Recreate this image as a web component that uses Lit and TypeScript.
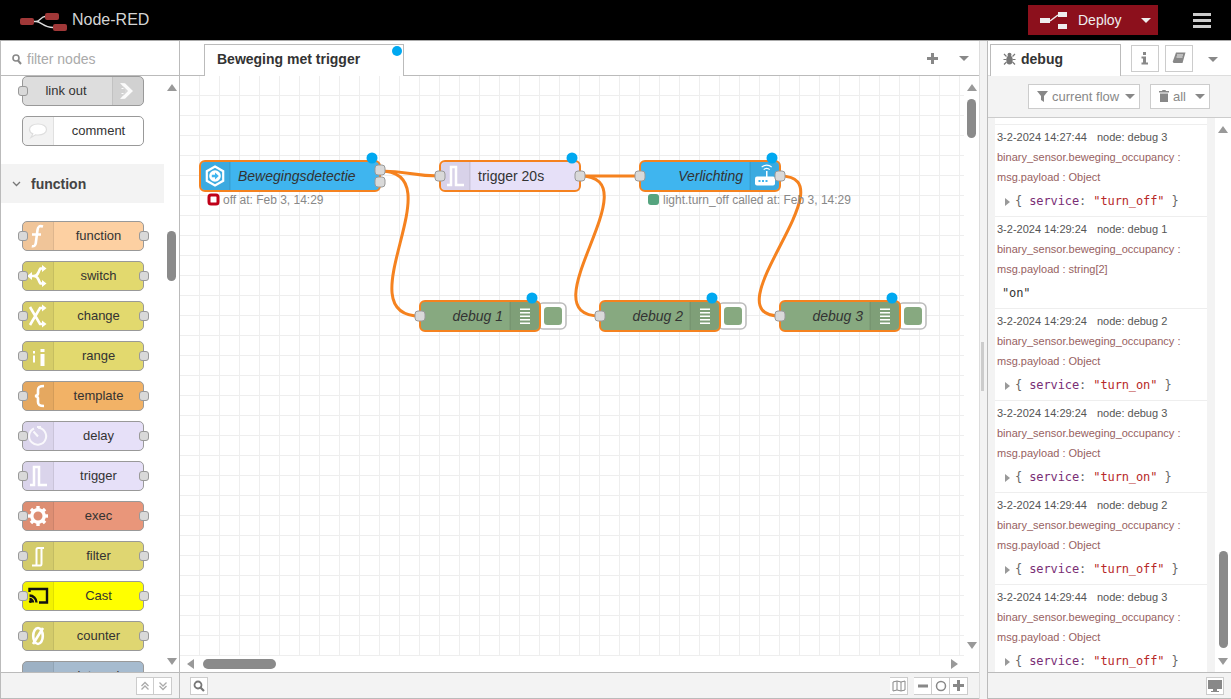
import { LitElement, html, css, svg } from "lit";
import { customElement } from "lit/decorators.js";

const W = "#fff";
function gear(c: string, cx = 15, cy = 15) {
  const teeth = [0, 45, 90, 135, 180, 225, 270, 315];
  return svg`<g fill="none" stroke=${c}>
    <circle cx=${cx} cy=${cy} r="6.2" stroke-width="3.4"></circle>
    ${teeth.map((a) => svg`<line x1=${cx} y1=${cy - 7} x2=${cx} y2=${cy - 10} stroke-width="3.4" transform="rotate(${a} ${cx} ${cy})"></line>`)}
  </g>`;
}
const ICONS: Record<string, unknown> = {
  function: svg`<path d="M20 5.500c-3.500-1-5-.2-5.500 3.500L12.800 22c-.4 2.800-1.800 3.600-4 3.200M9 13.500h9" fill="none" stroke=${W} stroke-width="2.600"/>`,
  switch: svg`<path d="M7 15h4c4 0 4-3 5.500-6l1-1.500h3M11 15c4 0 4 3 5.500 6l1 1.500h3" fill="none" stroke=${W} stroke-width="2.600"/><path d="M9 11l-5 4 5 4zM19 4l4.500 3.500L19 11zM19 19l4.500 3.500L19 26z" fill=${W}/>`,
  change: svg`<path d="M7 6l10 17h4M7 24L17 7h4" fill="none" stroke=${W} stroke-width="2.600"/><path d="M19 3.500l4.500 3.500L19 10.500zM19 19.500l4.500 3.500L19 26.500z" fill=${W}/>`,
  range: svg`<path d="M10 10h2v2.500h-2zM10 14.500h2v7h-2zM17.500 8h4v3h-4zM17.500 13h4v12h-4z" fill=${W}/>`,
  template: svg`<path d="M21 5c-4.500 0-6 1-6 4v3.500c0 1-1.200 2.300-3 2.500 1.800.2 3 1.500 3 2.500V21c0 3 1.500 4 6 4" fill="none" stroke=${W} stroke-width="2.600"/>`,
  delay: svg`<g fill="none" stroke=${W} stroke-width="2" opacity=".85"><path d="M11 7.500a8.500 8.500 0 1 0 4-.8"/><path d="M15 15.500L10.500 10.500"/><path d="M14 6h4"/></g>`,
  trigger: svg`<path d="M7 24h4V6h5v18h8" fill="none" stroke=${W} stroke-width="2.500"/>`,
  exec: gear(W),
  filter: svg`<path d="M9 24.500h3.500c1 0 1-1 1-2V8.500c0-1 .5-1.500 1.500-1.500h6M13 24.500h4.500c1 0 1-1 1-2V7" fill="none" stroke=${W} stroke-width="2"/>`,
  cast: svg`<g fill="none" stroke="#111" stroke-width="2.400"><path d="M6.500 11V8h17.500v13.500h-8"/><path d="M6.500 14.500a7 7 0 0 1 7 7M6.500 18a3.500 3.500 0 0 1 3.500 3.500"/></g><circle cx="7.500" cy="20.500" r="1.600" fill="#111"/>`,
  counter: svg`<g fill="none" stroke=${W} stroke-width="2.600"><ellipse cx="15" cy="15" rx="4.800" ry="8"/><path d="M10 23L20 7"/></g>`,
  detect: svg`<path d="M15 5.500l8.200 4.700v9.600L15 24.500l-8.200-4.700v-9.600z" fill="none" stroke=${W} stroke-width="2.200"/><circle cx="15" cy="15" r="5.800" fill=${W}/><path d="M11.800 13.800h3.200v-2.300l3.800 3.500-3.800 3.500v-2.300h-3.200z" fill="#3fb5ef"/>`,
  router: svg`<rect x="5" y="15.500" width="20" height="9" rx="2" fill=${W}/><rect x="16" y="10" width="1.500" height="6" fill=${W}/><path d="M13.700 8.700a4 4 0 0 1 6 0M11.700 6.200a7 7 0 0 1 10 0" fill="none" stroke=${W} stroke-width="1.200"/><g fill="#3fb5ef"><rect x="8.500" y="19" width="2" height="2"/><rect x="12" y="19" width="2" height="2"/><rect x="15.500" y="19" width="2" height="2"/></g>`,
  debug: svg`<g fill=${W}><rect x="10" y="7.500" width="10" height="1.500"/><rect x="10" y="11" width="10" height="1.500"/><rect x="10" y="14.500" width="10" height="1.500"/><rect x="10" y="18" width="10" height="1.500"/><rect x="10" y="21.500" width="10" height="1.500"/></g>`,
  link: svg`<path d="M7 7l5 .2 8 7.800-8 7.800-5 .2 4.500-5h-3v-1h3.500l1-2-1-2H8.500v-1h3z" fill=${W} opacity=".9"/><path d="M10 11l4 4-4 4" fill="none" stroke="#d6d6d6" stroke-width="1.500"/>`,
  comment: svg`<path d="M15 8c-5 0-8.500 2.300-8.500 5.500 0 2 1.300 3.500 3.300 4.400L8 21.500l4.500-2.700c.8.200 1.600.2 2.500.2 5 0 8.500-2.300 8.500-5.500S20 8 15 8z" fill="#fff" stroke="#ddd" stroke-width="1.200"/>`,
};

type Pal = { n: string; c: string; i: string; inp?: boolean; out?: boolean; iconRight?: boolean };
const TOP: Pal[] = [
  { n: "link out", c: "#dddddd", i: "link", inp: true, iconRight: true },
  { n: "comment", c: "#ffffff", i: "comment" },
];
const FN: Pal[] = [
  { n: "function", c: "#fdd0a2", i: "function", inp: true, out: true },
  { n: "switch", c: "#e2d96e", i: "switch", inp: true, out: true },
  { n: "change", c: "#e2d96e", i: "change", inp: true, out: true },
  { n: "range", c: "#e2d96e", i: "range", inp: true, out: true },
  { n: "template", c: "#f2b266", i: "template", inp: true, out: true },
  { n: "delay", c: "#e6e0f8", i: "delay", inp: true, out: true },
  { n: "trigger", c: "#e6e0f8", i: "trigger", inp: true, out: true },
  { n: "exec", c: "#e9967a", i: "exec", inp: true, out: true },
  { n: "filter", c: "#dfd671", i: "filter", inp: true, out: true },
  { n: "Cast", c: "#ffff00", i: "cast", inp: true, out: true },
  { n: "counter", c: "#dfd671", i: "counter", inp: true, out: true },
  { n: "interval", c: "#a6bbcf", i: "none" },
];

const LOGS = [
  ["3-2-2024 14:27:44", "debug 3", "turn_off"],
  ["3-2-2024 14:29:24", "debug 1", ""],
  ["3-2-2024 14:29:24", "debug 2", "turn_on"],
  ["3-2-2024 14:29:24", "debug 3", "turn_on"],
  ["3-2-2024 14:29:44", "debug 2", "turn_off"],
  ["3-2-2024 14:29:44", "debug 3", "turn_off"],
];

function port(x: number, y: number) {
  return svg`<rect class="port" x=${x - 5} y=${y - 5} width="10" height="10" rx="3"></rect>`;
}
function dot(x: number, y: number) {
  return svg`<circle class="dot" cx=${x} cy=${y} r="5.500"></circle>`;
}
function flowNode(x: number, w: number, y: number, fill: string, icon: string, label: string, iconRight = false, italic = true) {
  const ix = iconRight ? x + w - 30 : x;
  return svg`<g>
    <rect class="nodebox" x=${x} y=${y} width=${w} height="30" rx="5" fill=${fill}></rect>
    <path class="shade" d=${iconRight ? `M${ix} ${y + 1}h24a5 5 0 0 1 5 5v18a5 5 0 0 1-5 5h-24z` : `M${ix + 30} ${y + 1}h-24a5 5 0 0 0-5 5v18a5 5 0 0 0 5 5h24z`}></path>
    <line class="shadeline" x1=${iconRight ? ix : ix + 30} x2=${iconRight ? ix : ix + 30} y1=${y + 1} y2=${y + 29}></line>
    <g transform="translate(${ix} ${y})">${ICONS[icon]}</g>
    <text class="nlabel ${italic ? "it" : ""}" x=${iconRight ? x + w - 37 : x + 38} y=${y + 20} text-anchor=${iconRight ? "end" : "start"}>${label}</text>
  </g>`;
}
function debugNode(x: number) {
  return svg`<g>
    <rect class="dbgbtn" x=${x + 118} y="303" width="28" height="26" rx="5"></rect>
    <rect x=${x + 124} y="307" width="18" height="18" rx="3.500" fill="#87a980"></rect>
    ${flowNode(x, 120, 301, "#87a980", "debug", "debug " + (x === 420 ? 1 : x === 600 ? 2 : 3), true)}
    ${port(x, 316)}
    ${dot(x + 112, 298)}
  </g>`;
}

@customElement("app-root")
export class AppRoot extends LitElement {
  static styles = css`
    :host { display: block; width: 100vw; height: 100vh; overflow: hidden; font-family: "Liberation Sans", Arial, sans-serif; color: #333; background: #fff; }
    * { box-sizing: border-box; }
    .app { height: 100%; display: flex; flex-direction: column; }
    header { height: 41px; flex: none; background: #000; border-bottom: 1px solid #aaa; display: flex; align-items: center; padding-left: 20px; }
    .brand { font-size: 16px; color: #d4d4d4; margin-left: 4px; }
    .deploy { margin-left: auto; width: 130px; height: 30px; background: #8c101c; color: #eee; display: flex; align-items: center; font-size: 14px; padding-left: 12px; }
    .deploy svg { margin-right: 11px; }
    .caret { width: 0; height: 0; border-left: 5px solid transparent; border-right: 5px solid transparent; border-top: 5px solid #eee; margin-left: 19px; }
    .burger { margin: 0 20px 0 35px; width: 18px; display: flex; flex-direction: column; gap: 3px; }
    .burger i { display: block; height: 3px; background: #ccc; }
    .main { flex: 1; min-height: 0; display: flex; }

    .palette { width: 180px; flex: none; display: flex; flex-direction: column; border-left: 1px solid #bbb; border-right: 1px solid #bbb; }
    .filter { height: 35px; flex: none; border-bottom: 1px solid #bbb; display: flex; align-items: center; padding: 2px 0 0 11px; gap: 5px; font-size: 14px; color: #aaa; }
    .palbody { flex: 1; min-height: 0; display: flex; }
    .pallist { flex: 1; min-width: 0; overflow: hidden; }
    .pn { position: relative; margin: 0 0 10px 21px; width: 122px; height: 30px; border: 1px solid #999; border-radius: 5px; display: flex; font-size: 13px; }
    .pn .ic { width: 31px; flex: none; background: rgba(0, 0, 0, 0.05); border-right: 1px solid rgba(0, 0, 0, 0.08); border-radius: 4px 0 0 4px; }
    .pn.right .ic { border-right: none; border-left: 1px solid rgba(0, 0, 0, 0.08); border-radius: 0 4px 4px 0; }
    .pn.right { flex-direction: row-reverse; }
    .pn.right .lb { padding-right: 3px; }
    .pn .ic svg { display: block; margin-top: -1px; }
    .pn .lb { flex: 1; text-align: center; line-height: 28px; color: #333; }
    .pport { position: absolute; top: 9px; width: 10px; height: 10px; border: 1px solid #999; border-radius: 3px; background: #d9d9d9; }
    .pport.l { left: -5px; }
    .pport.r { right: -6px; }
    .section { margin: 18px 0 18px; height: 39px; background: #f3f3f3; display: flex; align-items: center; font-size: 14px; font-weight: 700; padding-left: 11px; gap: 10px; color: #444; }

    .sbv { width: 15px; flex: none; position: relative; display: flex; flex-direction: column; align-items: center; background: #fff; }
    .up { width: 0; height: 0; margin-top: 8px; border-left: 5px solid transparent; border-right: 5px solid transparent; border-bottom: 7px solid #999; flex: none; }
    .down { width: 0; height: 0; margin-top: auto; margin-bottom: 7px; border-left: 5px solid transparent; border-right: 5px solid transparent; border-top: 7px solid #999; flex: none; }
    .thumb { width: 9px; background: #8a8a8a; border-radius: 5px; flex: none; }

    .foot { height: 27px; flex: none; background: #f3f3f3; border-top: 1px solid #bbb; border-bottom: 1px solid #bbb; display: flex; align-items: center; }
    .fbtn { width: 18px; height: 18px; background: #fff; border: 1px solid #ccc; display: flex; align-items: center; justify-content: center; }
    .fbtn + .fbtn { border-left: none; }

    .work { flex: 1; min-width: 0; display: flex; flex-direction: column; border-right: 1px solid #ddd; }
    .wtabs { height: 35px; flex: none; border-bottom: 1px solid #bbb; display: flex; align-items: flex-end; padding-left: 24px; position: relative; }
    .wtab { width: 200px; height: 32px; background: #fff; border: 1px solid #bbb; border-bottom: none; font-size: 14px; font-weight: 700; padding: 6px 0 0 12px; margin-bottom: -1px; position: relative; color: #333; }
    .tabdot { position: absolute; right: 1px; top: 1px; width: 10px; height: 10px; border-radius: 50%; background: #00a8f0; }
    .wtools { margin-left: auto; display: flex; align-items: center; align-self: center; gap: 21px; padding-right: 10px; }
    .carg { width: 0; height: 0; border-left: 5px solid transparent; border-right: 5px solid transparent; border-top: 5px solid #888; }
    .chartrow { flex: 1; min-height: 0; display: flex; }
    .chart { flex: 1; min-width: 0; overflow: hidden; background-color: #fff; background-image: linear-gradient(#eee 1px, transparent 1px), linear-gradient(90deg, #eee 1px, transparent 1px); background-size: 20px 20px; background-position: -1px -1px; }
    .chart svg { display: block; }
    .sbh { height: 16px; flex: none; display: flex; align-items: center; padding: 0 21px 0 7px; }
    .lefta { width: 0; height: 0; border-top: 5px solid transparent; border-bottom: 5px solid transparent; border-right: 7px solid #999; }
    .righta { width: 0; height: 0; margin-left: auto; border-top: 5px solid transparent; border-bottom: 5px solid transparent; border-left: 7px solid #999; }
    .hthumb { width: 73px; height: 10px; background: #8a8a8a; border-radius: 5px; margin-left: 9px; }
    .wfoot { padding: 0 11px 0 10px; }
    .push { margin-left: auto; margin-right: 6px; }

    .nodebox { stroke: #f5821f; stroke-width: 2; }
    .shade { fill: rgba(0, 0, 0, 0.06); }
    .shadeline { stroke: rgba(0, 0, 0, 0.12); stroke-width: 1; }
    .nlabel { font-size: 14px; fill: #333; }
    .it { font-style: italic; }
    .port { fill: #d9d9d9; stroke: #999; stroke-width: 1; }
    .dot { fill: #00a8f0; }
    .wire { fill: none; stroke: #f5821f; stroke-width: 3; }
    .dbgbtn { fill: #fff; stroke: #bbb; stroke-width: 1.500; }
    .status { font-size: 12px; fill: #888; }

    .sep { width: 7px; flex: none; background: #f3f3f3; position: relative; }
    .handle { position: absolute; left: 1px; top: 301px; width: 3px; height: 49px; background: #ccc; }

    .side { width: 244px; flex: none; display: flex; flex-direction: column; border-left: 1px solid #bbb; }
    .stabs { height: 35px; flex: none; border-bottom: 1px solid #ddd; display: flex; align-items: flex-end; padding-left: 2px; position: relative; }
    .stab { width: 131px; height: 32px; border: 1px solid #bbb; border-bottom: none; background: #fff; margin-bottom: -1px; display: flex; align-items: center; gap: 5px; padding: 0 0 4px 12px; font-size: 14px; font-weight: 700; color: #333; }
    .sbtn { width: 28px; height: 27px; border: 1px solid #ccc; background: #fff; display: flex; align-items: center; justify-content: center; margin-bottom: 3px; }
    .sbtn.a { margin-left: 10px; }
    .sbtn.b { margin-left: 6px; }
    .stabs .carg { margin: 0 13px 13px auto; }
    .dtool { height: 42px; flex: none; background: #f3f3f3; border-bottom: 1px solid #ccc; display: flex; align-items: center; justify-content: flex-end; padding: 0 21px 1px 0; gap: 10px; }
    .dbtn { height: 25px; background: #fff; border: 1px solid #ccc; display: flex; align-items: center; font-size: 13px; color: #888; padding-left: 8px; gap: 4px; flex: none; }
    .dbtn.flow { width: 112px; }
    .dbtn.all { width: 60px; }
    .dbtn .carg { margin-left: auto; margin-right: 4px; }
    .dbody { flex: 1; min-height: 0; display: flex; background: #f3f3f3; }
    .dlist { flex: 1; min-width: 0; margin: 0 8px 0 7px; background: #fff; padding-top: 5px; overflow: hidden; border-top: 1px solid #fff; }
    .row { height: 92px; border-top: 1px solid #eee; padding: 2px 0 0 2px; font-size: 11px; line-height: 20px; white-space: nowrap; }
    .meta { color: #555; }
    .meta span { margin-left: 10px; }
    .topic { color: #975f5f; }
    .pay { font-family: "DejaVu Sans Mono", "Liberation Mono", monospace; font-size: 12px; letter-spacing: -0.11px; line-height: 29px; color: #666; padding-left: 8px; display: flex; align-items: center; }
    .pay.str { padding-left: 5px; color: #333; }
    .tri { width: 0; height: 0; border-top: 4px solid transparent; border-bottom: 4px solid transparent; border-left: 5px solid #999; margin-right: 5px; }
    .k { color: #792e75; }
    .v { color: #b72828; }
    pre { margin: 0; font: inherit; }
    .sfoot { justify-content: flex-end; padding-right: 7px; }
  `;

  private palNode(p: Pal) {
    return html`<div class="pn ${p.iconRight ? "right" : ""}" style="background:${p.c}">
      <div class="ic">${ICONS[p.i] ? html`<svg width="30" height="30" viewBox="0 0 30 30">${ICONS[p.i]}</svg>` : ""}</div>
      <div class="lb">${p.n}</div>
      ${p.inp ? html`<div class="pport l"></div>` : ""}
      ${p.out ? html`<div class="pport r"></div>` : ""}
    </div>`;
  }

  private canvas() {
    return html`<svg width="785" height="580" viewBox="180 76 785 580">
      <path class="wire" d="M380 171C410 171 410 176 440 176"></path>
      <path class="wire" d="M380 171C457 171 343 316 420 316"></path>
      <path class="wire" d="M580 176H640"></path>
      <path class="wire" d="M580 176C655 176 525 316 600 316"></path>
      <path class="wire" d="M780 176C852 176 708 316 780 316"></path>

      ${flowNode(200, 180, 161, "#3fb5ef", "detect", "Bewegingsdetectie")}
      ${port(380, 170)}${port(380, 182)}${dot(372, 158)}
      <rect x="209" y="195" width="9" height="9" rx="2" fill="#fff" stroke="#c00018" stroke-width="3"></rect>
      <text class="status" x="223" y="204">off at: Feb 3, 14:29</text>

      ${flowNode(440, 140, 161, "#e6e0f8", "trigger", "trigger 20s", false, false)}
      ${port(440, 176)}${port(580, 176)}${dot(572, 158)}

      ${flowNode(640, 140, 161, "#3fb5ef", "router", "Verlichting", true)}
      ${port(640, 176)}${port(780, 176)}${dot(772, 158)}
      <rect x="648" y="194" width="11" height="11" rx="3" fill="#55a47f"></rect>
      <text class="status" x="663" y="204">light.turn_off called at: Feb 3, 14:29</text>

      ${debugNode(420)}${debugNode(600)}${debugNode(780)}
    </svg>`;
  }

  render() {
    return html`<div class="app">
      <header>
        <svg width="48" height="22" viewBox="0 0 48 22">
          <path d="M14 12.500h2c4 0 5-5 9-5M16 12.500c5 0 8 6 17 6" fill="none" stroke="#ddd" stroke-width="1.300"></path>
          <rect x="0" y="9" width="14" height="7" rx="2" fill="#a03838"></rect>
          <rect x="25" y="4" width="14" height="7" rx="2" fill="#a03838"></rect>
          <rect x="33" y="15" width="14" height="7" rx="2" fill="#a03838"></rect>
        </svg>
        <span class="brand">Node-RED</span>
        <div class="deploy">
          <svg width="27" height="17" viewBox="0 0 27 17"><path d="M0 6h10v5H0zM18 0h9v5h-9zM18 12h9v5h-9z" fill="#eee"></path><path d="M10 9l8-6" stroke="#eee" stroke-width="1.500"></path></svg>
          Deploy<span class="caret"></span>
        </div>
        <div class="burger"><i></i><i></i><i></i></div>
      </header>
      <div class="main">
        <div class="palette">
          <div class="filter">
            <svg width="10" height="11" viewBox="0 0 10 11"><circle cx="4" cy="4" r="3" fill="none" stroke="#888" stroke-width="1.600"></circle><path d="M6 6.500l3 3.500" stroke="#888" stroke-width="2"></path></svg>
            filter nodes
          </div>
          <div class="palbody">
            <div class="pallist">
              ${TOP.map((p) => this.palNode(p))}
              <div class="section">
                <svg width="9" height="6" viewBox="0 0 9 6"><path d="M1 1l3.500 3.500L8 1" fill="none" stroke="#777" stroke-width="1.300"></path></svg>
                function
              </div>
              ${FN.map((p) => this.palNode(p))}
            </div>
            <div class="sbv">
              <div class="up"></div>
              <div class="thumb" style="height:50px;margin-top:140px"></div>
              <div class="down"></div>
            </div>
          </div>
          <div class="foot" style="justify-content:flex-end;padding-right:7px">
            <div class="fbtn"><svg width="10" height="10" viewBox="0 0 10 10"><path d="M1.500 5L5 1.500 8.500 5M1.500 8.500L5 5l3.500 3.500" fill="none" stroke="#aaa" stroke-width="1.300"></path></svg></div>
            <div class="fbtn"><svg width="10" height="10" viewBox="0 0 10 10"><path d="M1.500 1.500L5 5l3.500-3.500M1.500 5L5 8.500 8.500 5" fill="none" stroke="#aaa" stroke-width="1.300"></path></svg></div>
          </div>
        </div>

        <div class="work">
          <div class="wtabs">
            <div class="wtab">Beweging met trigger<span class="tabdot"></span></div>
            <div class="wtools">
              <svg width="11" height="11" viewBox="0 0 11 11"><path d="M4 0h3v4h4v3H7v4H4V7H0V4h4z" fill="#888"></path></svg>
              <div class="carg"></div>
            </div>
          </div>
          <div class="chartrow">
            <div class="chart">${this.canvas()}</div>
            <div class="sbv">
              <div class="up"></div>
              <div class="thumb" style="height:39px;margin-top:8px"></div>
              <div class="down"></div>
            </div>
          </div>
          <div class="sbh"><div class="lefta"></div><div class="hthumb"></div><div class="righta"></div></div>
          <div class="foot wfoot">
            <div class="fbtn"><svg width="12" height="12" viewBox="0 0 12 12"><circle cx="5" cy="5" r="3.500" fill="none" stroke="#777" stroke-width="1.800"></circle><path d="M7.500 7.500l3.500 3.500" stroke="#777" stroke-width="2.200"></path></svg></div>
            <div class="fbtn push"><svg width="14" height="12" viewBox="0 0 14 12"><path d="M1 2l4-1 4 1 4-1v9l-4 1-4-1-4 1zM5 1v9M9 2v9" fill="none" stroke="#888" stroke-width="1"></path></svg></div>
            <div class="fbtn"><svg width="10" height="4" viewBox="0 0 10 4"><rect x="0" y="0.500" width="10" height="3" fill="#888"></rect></svg></div>
            <div class="fbtn"><svg width="12" height="12" viewBox="0 0 12 12"><circle cx="6" cy="6" r="4.500" fill="none" stroke="#888" stroke-width="1.500"></circle></svg></div>
            <div class="fbtn"><svg width="11" height="11" viewBox="0 0 11 11"><path d="M4 0h3v4h4v3H7v4H4V7H0V4h4z" fill="#888"></path></svg></div>
          </div>
        </div>

        <div class="sep"><div class="handle"></div></div>

        <div class="side">
          <div class="stabs">
            <div class="stab">
              <svg width="13" height="13" viewBox="0 0 13 13"><g fill="#777"><ellipse cx="6.500" cy="8" rx="3.200" ry="4.500"></ellipse><circle cx="6.500" cy="2.800" r="2"></circle></g><path d="M1 2l2.500 2.500M12 2L9.500 4.500M.5 7.500h3M12.500 7.500h-3M1 12.500l2.500-2.500M12 12.500L9.500 10" stroke="#777" stroke-width="1.200"></path></svg>
              debug
            </div>
            <div class="sbtn a"><svg width="8" height="13" viewBox="0 0 8 13"><path d="M2 0h3v3H2zM0.500 4.500H5v6h2v2H0.500v-2h1.500v-4H0.500z" fill="#888"></path></svg></div>
            <div class="sbtn b"><svg width="14" height="13" viewBox="0 0 14 13"><path d="M4 .5h9.500L10.500 11H1.500L.8 9.500z" fill="#888"></path><path d="M1.500 11.500h8.500M5 3h6M4.500 5h6" stroke="#fff" stroke-width=".9"></path></svg></div>
            <div class="carg"></div>
          </div>
          <div class="dtool">
            <div class="dbtn flow"><svg width="11" height="11" viewBox="0 0 11 11"><path d="M0 0h11L7 5v6L4 9V5z" fill="#888"></path></svg>current flow<span class="carg"></span></div>
            <div class="dbtn all"><svg width="10" height="12" viewBox="0 0 10 12"><path d="M3.500 0h3l.500 1h3v1.500H0V1h3zM1 3.500h8V12H1z" fill="#888"></path></svg>all<span class="carg"></span></div>
          </div>
          <div class="dbody">
            <div class="dlist">
              ${LOGS.map(
                (l) => html`<div class="row">
                  <div class="meta">${l[0]}<span>node: ${l[1]}</span></div>
                  <div class="topic">binary_sensor.beweging_occupancy :</div>
                  <div class="topic">msg.payload : ${l[2] ? "Object" : "string[2]"}</div>
                  ${l[2]
                    ? html`<div class="pay"><i class="tri"></i><pre>{ <span class="k">service</span>: <span class="v">"${l[2]}"</span> }</pre></div>`
                    : html`<div class="pay str"><pre>"on"</pre></div>`}
                </div>`
              )}
            </div>
            <div class="sbv" style="width:16px">
              <div class="up"></div>
              <div class="thumb" style="height:97px;margin-top:418px"></div>
              <div class="down"></div>
            </div>
          </div>
          <div class="foot sfoot">
            <div class="fbtn"><svg width="14" height="13" viewBox="0 0 14 13"><path d="M0 1h14v9H0zM5 10h4v2h2v1H3v-1h2z" fill="#888"></path></svg></div>
          </div>
        </div>
      </div>
    </div>`;
  }
}
